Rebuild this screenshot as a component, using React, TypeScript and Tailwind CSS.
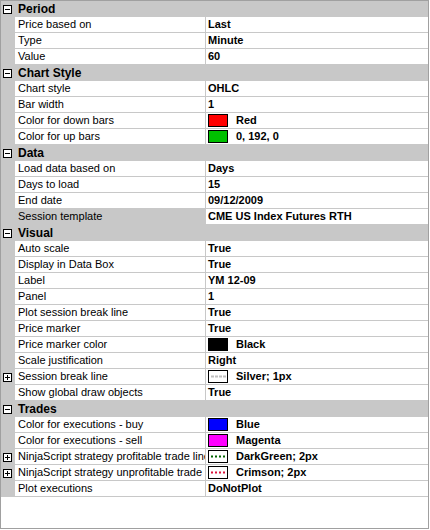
import type { ReactNode } from 'react'

type Swatch =
  | { kind: 'fill'; color: string }
  | { kind: 'line'; color: string; dash: string; width: number }

type Row = {
  label: string
  value: string
  swatch?: Swatch
  expand?: boolean
  selected?: boolean
}

type Category = { name: string; rows: Row[] }

const data: Category[] = [
  {
    name: 'Period',
    rows: [
      { label: 'Price based on', value: 'Last' },
      { label: 'Type', value: 'Minute' },
      { label: 'Value', value: '60' },
    ],
  },
  {
    name: 'Chart Style',
    rows: [
      { label: 'Chart style', value: 'OHLC' },
      { label: 'Bar width', value: '1' },
      { label: 'Color for down bars', value: 'Red', swatch: { kind: 'fill', color: '#ff0000' } },
      { label: 'Color for up bars', value: '0, 192, 0', swatch: { kind: 'fill', color: '#00c000' } },
    ],
  },
  {
    name: 'Data',
    rows: [
      { label: 'Load data based on', value: 'Days' },
      { label: 'Days to load', value: '15' },
      { label: 'End date', value: '09/12/2009' },
      { label: 'Session template', value: 'CME US Index Futures RTH', selected: true },
    ],
  },
  {
    name: 'Visual',
    rows: [
      { label: 'Auto scale', value: 'True' },
      { label: 'Display in Data Box', value: 'True' },
      { label: 'Label', value: 'YM 12-09' },
      { label: 'Panel', value: '1' },
      { label: 'Plot session break line', value: 'True' },
      { label: 'Price marker', value: 'True' },
      { label: 'Price marker color', value: 'Black', swatch: { kind: 'fill', color: '#000000' } },
      { label: 'Scale justification', value: 'Right' },
      {
        label: 'Session break line',
        value: 'Silver; 1px',
        expand: true,
        swatch: { kind: 'line', color: '#c0c0c0', dash: '3 1', width: 2 },
      },
      { label: 'Show global draw objects', value: 'True' },
    ],
  },
  {
    name: 'Trades',
    rows: [
      { label: 'Color for executions - buy', value: 'Blue', swatch: { kind: 'fill', color: '#0000ff' } },
      { label: 'Color for executions - sell', value: 'Magenta', swatch: { kind: 'fill', color: '#ff00ff' } },
      {
        label: 'NinjaScript strategy profitable trade line',
        value: 'DarkGreen; 2px',
        expand: true,
        swatch: { kind: 'line', color: '#006400', dash: '2 2', width: 2 },
      },
      {
        label: 'NinjaScript strategy unprofitable trade line',
        value: 'Crimson; 2px',
        expand: true,
        swatch: { kind: 'line', color: '#dc143c', dash: '2 2', width: 2 },
      },
      { label: 'Plot executions', value: 'DoNotPlot' },
    ],
  },
]

function Box({ minus }: { minus?: boolean }) {
  return (
    <svg width="9" height="9" viewBox="0 0 9 9" className="block">
      <rect x="0.5" y="0.5" width="8" height="8" fill="white" stroke="black" />
      <line x1="2" y1="4.5" x2="7" y2="4.5" stroke="black" />
      {!minus && <line x1="4.5" y1="2" x2="4.5" y2="7" stroke="black" />}
    </svg>
  )
}

function SwatchBox({ swatch }: { swatch: Swatch }) {
  if (swatch.kind === 'fill') {
    return <div className="w-[20px] h-[13px] border border-black shrink-0" style={{ backgroundColor: swatch.color }} />
  }
  return (
    <svg width="20" height="13" viewBox="0 0 20 13" className="block shrink-0">
      <rect x="0.5" y="0.5" width="19" height="12" fill="white" stroke="black" />
      <line x1="3" y1="6.5" x2="18" y2="6.5" stroke={swatch.color} strokeWidth={swatch.width} strokeDasharray={swatch.dash} />
    </svg>
  )
}

function Margin({ children }: { children?: ReactNode }) {
  return <div className="w-[14px] h-full bg-[#c8c8c8] shrink-0 flex items-center pl-[2px]">{children}</div>
}

function PropertyRow({ row }: { row: Row }) {
  return (
    <div className="flex h-4">
      <Margin>{row.expand && <Box />}</Margin>
      <div className="flex flex-1 border-b border-[#c8c8c8]">
        <div
          className={
            'w-[190px] shrink-0 pl-[3px] overflow-hidden whitespace-nowrap leading-[15px] text-black ' +
            (row.selected ? 'bg-[#c8c8c8]' : 'bg-white')
          }
        >
          {row.label}
        </div>
        <div className="flex-1 flex items-center border-l border-[#c8c8c8] pl-[2px] gap-[8px] font-bold whitespace-nowrap overflow-hidden">
          {row.swatch && <SwatchBox swatch={row.swatch} />}
          <span className="leading-[15px]">{row.value}</span>
        </div>
      </div>
    </div>
  )
}

export default function App() {
  return (
    <div className="w-[429px] h-[529px] border border-[#a0a0a0] bg-white overflow-hidden text-[11px] text-black font-['Liberation_Sans',Arial,sans-serif]">
      {data.map((cat) => (
        <div key={cat.name}>
          <div className="flex h-4 bg-[#c8c8c8] items-center">
            <div className="w-[14px] pl-[2px] shrink-0">
              <Box minus />
            </div>
            <div className="pl-[3px] font-bold text-[12px] leading-4">{cat.name}</div>
          </div>
          {cat.rows.map((r) => (
            <PropertyRow key={r.label} row={r} />
          ))}
        </div>
      ))}
    </div>
  )
}
